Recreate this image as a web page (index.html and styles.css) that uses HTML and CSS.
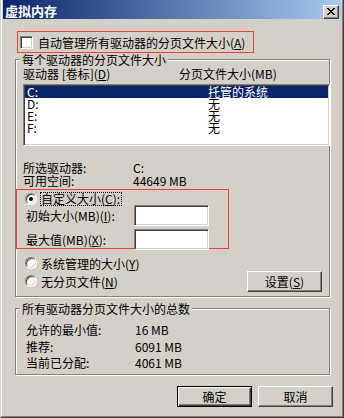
FILE: index.html
```html
<!DOCTYPE html>
<html lang="zh-CN">
<head>
<meta charset="utf-8">
<title>虚拟内存</title>
<link rel="stylesheet" href="styles.css">
</head>
<body>
<div class="window">
  <div class="frame">
    <div class="titlebar">
      <span class="title">虚拟内存</span>
      <span class="close"><svg width="8" height="7" viewBox="0 0 8 7" shape-rendering="crispEdges"><path fill="#000" d="M0 0h2v1h-2z M6 0h2v1h-2z M1 1h2v1h-2z M5 1h2v1h-2z M2 2h4v1h-4z M3 3h2v1h-2z M2 4h4v1h-4z M1 5h2v1h-2z M5 5h2v1h-2z M0 6h2v1h-2z M6 6h2v1h-2z"/></svg></span>
    </div>
    <div class="content">
      <div class="autobox">
        <span class="checkbox"></span>
        <span>自动管理所有驱动器的分页文件大小(<u>A</u>)</span>
      </div>

      <fieldset class="group g1">
        <legend>每个驱动器的分页文件大小</legend>
        <div class="listhead"><span>驱动器 [卷标](<u>D</u>)</span><span>分页文件大小(MB)</span></div>
        <div class="listbox">
          <div class="row sel"><span>C:</span><span>托管的系统</span></div>
          <div class="row"><span>D:</span><span>无</span></div>
          <div class="row"><span>E:</span><span>无</span></div>
          <div class="row"><span>F:</span><span>无</span></div>
        </div>
        <div class="info">
          <span>所选驱动器:</span><span>C:</span>
          <span>可用空间:</span><span>44649 MB</span>
        </div>
        <div class="custombox">
          <div class="radio-row first"><span class="radio on"></span><span class="focus">自定义大小(<u>C</u>):</span></div>
          <div class="field f1"><span class="flabel">初始大小(MB)(<u>I</u>):</span><span class="input"></span></div>
          <div class="field f2"><span class="flabel">最大值(MB)(<u>X</u>):</span><span class="input"></span></div>
        </div>
        <div class="opts">
          <div class="radios">
            <div class="radio-row"><span class="radio"></span><span>系统管理的大小(<u>Y</u>)</span></div>
            <div class="radio-row"><span class="radio"></span><span>无分页文件(<u>N</u>)</span></div>
          </div>
          <span class="btn set">设置(<u>S</u>)</span>
        </div>
      </fieldset>

      <fieldset class="group g2">
        <legend>所有驱动器分页文件大小的总数</legend>
        <div class="totals">
          <span>允许的最小值:</span><span>16 MB</span>
          <span>推荐:</span><span>6091 MB</span>
          <span>当前已分配:</span><span>4061 MB</span>
        </div>
      </fieldset>

      <div class="actions">
        <span class="btn default">确定</span>
        <span class="btn">取消</span>
      </div>
    </div>
  </div>
</div>
</body>
</html>
```

FILE: styles.css
```css
* { box-sizing: border-box; }
html, body { margin: 0; padding: 0; }
body {
  width: 344px;
  height: 418px;
  overflow: hidden;
  background: #d4d0c8;
  color: #000;
  font-family: "Noto Sans CJK SC", "Noto Sans", sans-serif;
  font-size: 12px;
  line-height: 13px;
}
u { text-underline-offset: 1px; }

.window {
  width: 344px;
  height: 418px;
  background: #d4d0c8;
  border-left: 1px solid #d4d0c8;
  border-right: 1px solid #404040;
  border-bottom: 1px solid #404040;
}
.frame {
  height: 100%;
  border-left: 1px solid #fff;
  border-right: 1px solid #808080;
  border-bottom: 1px solid #808080;
  padding: 0 1px 1px 1px;
}

.titlebar {
  height: 19px;
  background: linear-gradient(to right, #0a246a, #a6caf0);
  display: flex;
  justify-content: space-between;
  align-items: flex-start;
  padding: 0 2px 0 2px;
}
.title {
  color: #fff;
  font-weight: bold;
  font-size: 13px;
  line-height: 15px;
  margin-top: 3px;
}
.close {
  margin-top: 5px;
  width: 16px;
  height: 14px;
  background: #d4d0c8;
  border: 1px solid;
  border-color: #fff #404040 #404040 #fff;
  box-shadow: inset -1px -1px #808080;
  display: flex;
  padding: 2px 0 0 3px;
}
.close svg { display: block; }

.content { padding-top: 12px; }

.autobox {
  margin-left: 14px;
  width: 237px;
  height: 22px;
  border: 1px solid #e84040;
  display: flex;
  align-items: center;
  gap: 5px;
  padding-left: 2px;
}
.checkbox {
  width: 13px;
  height: 13px;
  flex: none;
  background: #fff;
  border: 1px solid;
  border-color: #808080 #fff #fff #808080;
  box-shadow: inset 1px 1px #404040, inset -1px -1px #d4d0c8;
}

.group {
  margin: 0 0 0 12px;
  width: 315px;
  min-width: 0;
  border: 1px solid #808080;
  box-shadow: inset 1px 1px #fff, 1px 1px #fff;
  padding: 0 0 0 7px;
}
.group legend {
  padding: 0 2px;
  margin-left: -3px;
  line-height: 13px;
  background: #d4d0c8;
}
.g1 { height: 244px; margin-top: 0; }
.g2 { height: 73px; margin-top: 5px; }

.listhead {
  display: grid;
  grid-template-columns: 156px 1fr;
  margin-top: 1px;
}
.listbox {
  margin-top: 4px;
  width: 307px;
  height: 62px;
  background: #fff;
  border: 1px solid;
  border-color: #808080 #fff #fff #808080;
  box-shadow: inset 1px 1px #404040, inset -1px -1px #d4d0c8;
  padding: 1px;
}
.row {
  display: grid;
  grid-template-columns: 181px 1fr;
  height: 12px;
  line-height: 12px;
  padding-left: 2px;
}
.row.sel { background: #0a246a; color: #fff; }

.info {
  display: grid;
  grid-template-columns: 110px 1fr;
  margin-top: 15px;
}

.custombox {
  margin-left: -7px;
  margin-top: 2px;
  width: 213px;
  height: 60px;
  border: 1px solid #e84040;
  position: relative;
  z-index: 1;
}
.radio-row {
  display: flex;
  align-items: center;
  gap: 4px;
}
.radio-row.first {
  margin-top: 2px;
  padding-left: 8px;
  gap: 3px;
}
.radio {
  position: relative;
  width: 12px;
  height: 12px;
  flex: none;
  border-radius: 50%;
  background: #fff;
  border: 1px solid;
  border-color: #808080 #fff #fff #808080;
  box-shadow: inset 1px 1px #404040, inset -1px -1px #d4d0c8;
}
.radio.on::after {
  content: "";
  position: absolute;
  left: 3px;
  top: 3px;
  width: 4px;
  height: 4px;
  border-radius: 50%;
  background: #000;
}
.focus {
  border: 1px dotted #000;
  line-height: 12px;
  padding-right: 1px;
}
.field {
  display: flex;
  align-items: center;
  padding-left: 9px;
  height: 21px;
}
.field.f1 { margin-top: -1px; }
.field.f2 { margin-top: 3px; }
.flabel { width: 108px; flex: none; }
.input {
  width: 75px;
  height: 21px;
  flex: none;
  background: #fff;
  border: 1px solid;
  border-color: #808080 #fff #fff #808080;
  box-shadow: inset 1px 1px #404040, inset -1px -1px #d4d0c8;
}

.opts {
  display: flex;
  justify-content: space-between;
  align-items: flex-end;
  margin-top: 5px;
  padding-left: 2px;
  padding-right: 7px;
}
.opts .radio-row { height: 18px; }

.btn {
  display: flex;
  align-items: center;
  justify-content: center;
  width: 75px;
  height: 21px;
  background: #d4d0c8;
  border: 1px solid;
  border-color: #fff #404040 #404040 #fff;
  box-shadow: inset -1px -1px #808080;
  line-height: 13px;
}
.btn.set { margin-bottom: -2px; }
.btn.default {
  border-color: #000;
  box-shadow: inset 1px 1px #fff, inset -1px -1px #404040, inset -2px -2px #808080;
}

.totals {
  display: grid;
  grid-template-columns: 109px 1fr;
  line-height: 16.5px;
  margin-top: 7px;
  padding-left: 3px;
}

.actions {
  display: flex;
  justify-content: flex-end;
  gap: 6px;
  margin-top: 11px;
  padding-right: 8px;
}
```
